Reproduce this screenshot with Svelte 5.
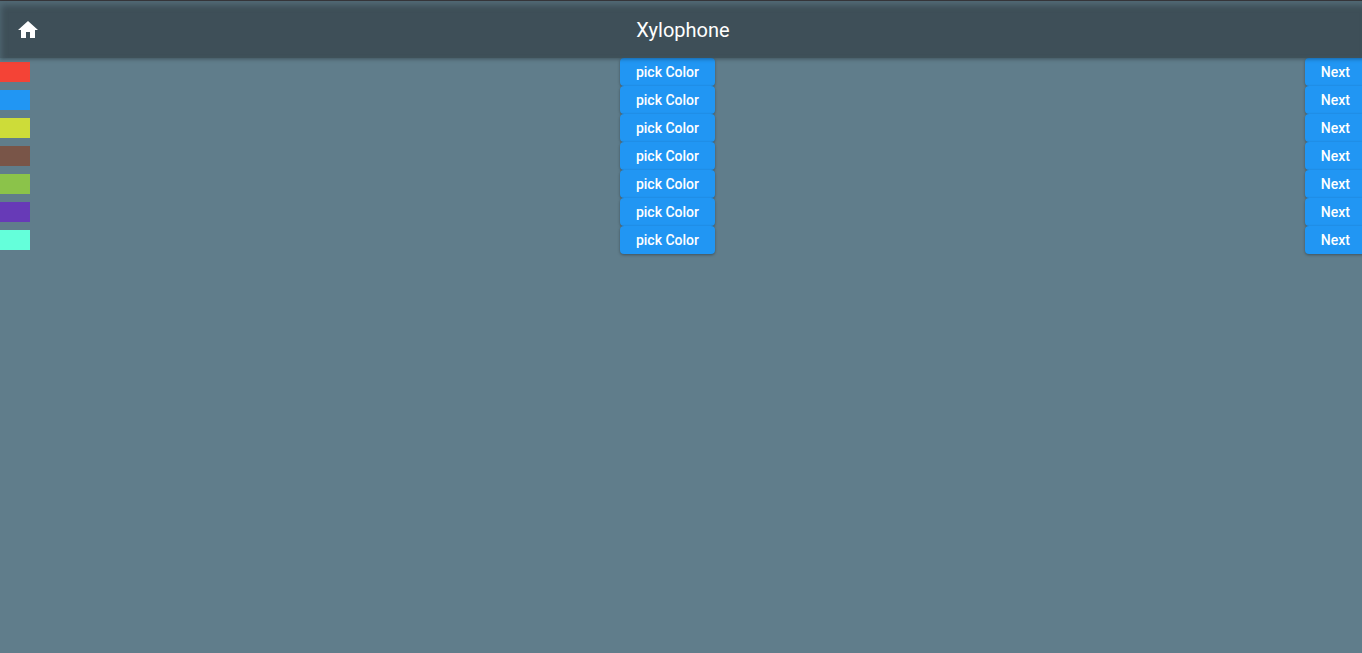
<script>
  const bars = [
    { name: 'red', color: '#f44336' },
    { name: 'blue', color: '#2196f3' },
    { name: 'lime', color: '#cddc39' },
    { name: 'brown', color: '#795548' },
    { name: 'light green', color: '#8bc34a' },
    { name: 'deep purple', color: '#673ab7' },
    { name: 'teal', color: '#64ffda' }
  ];
</script>

<div class="app">
  <header>
    <button class="home" aria-label="Home">
      <svg viewBox="0 0 24 24" width="24" height="24" aria-hidden="true">
        <path d="M10 20v-6h4v6h5v-8h3L12 3 2 12h3v8z" fill="#fff" />
      </svg>
    </button>
    <h1>Xylophone</h1>
  </header>
  <main>
    {#each bars as bar (bar.name)}
      <div class="row">
        <span class="swatch" style="background: {bar.color}"></span>
        <button class="raised">pick Color</button>
        <button class="raised">Next</button>
      </div>
    {/each}
  </main>
</div>

<style>
  :global(body) {
    margin: 0;
    background: #607d8b;
    overflow: hidden;
  }
  .app {
    margin-right: -4px;
    min-height: 100vh;
    box-sizing: border-box;
    border-top: 1px solid #3a3a3f;
    font-family: Roboto, sans-serif;
    color: #fff;
  }
  header {
    position: relative;
    z-index: 1;
    display: grid;
    grid-template-columns: 56px 1fr 56px;
    align-items: center;
    box-sizing: border-box;
    height: 57px;
    padding-top: 1px;
    background: #3e4f58;
    box-shadow:
      inset 1px 4px 6px rgba(96, 125, 139, 0.6),
      0 1px 4px rgba(0, 0, 0, 0.35);
  }
  .home {
    display: flex;
    align-items: center;
    justify-content: center;
    height: 56px;
    padding: 0;
    border: 0;
    background: none;
  }
  h1 {
    margin: 0;
    font-size: 20px;
    line-height: 26px;
    font-weight: 400;
    text-align: center;
  }
  .row {
    display: flex;
    align-items: center;
    justify-content: space-between;
    height: 28px;
  }
  .swatch {
    width: 30px;
    height: 20px;
  }
  .raised {
    height: 28px;
    padding: 0 16px;
    border: 0;
    border-radius: 4px;
    background: #2196f3;
    box-shadow: 0 1px 3px rgba(0, 0, 0, 0.35);
    color: #fff;
    font: 500 14px/20px Roboto, sans-serif;
  }
</style>
